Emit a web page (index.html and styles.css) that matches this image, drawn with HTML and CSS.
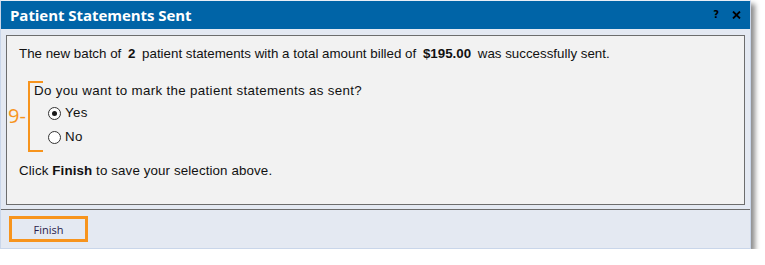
FILE: index.html
```html
<!DOCTYPE html>
<html>
<head>
<meta charset="utf-8">
<link rel="stylesheet" href="styles.css">
</head>
<body>
<div class="dialog">
  <div class="titlebar">
    <span class="title">Patient Statements Sent</span>
    <div class="tools">
      <span class="help">?</span>
      <svg class="close" width="9" height="8" viewBox="0 0 9 8"><path d="M1 0.5 L8 7.5 M8 0.5 L1 7.5" stroke="#000" stroke-width="1.8" fill="none"/></svg>
    </div>
  </div>
  <div class="panel">
    <p class="line first">The new batch of <b class="sp">2</b> patient statements with a total amount billed of <b class="sp">$195.00</b> was successfully sent.</p>
    <div class="group">
      <span class="marker">9-</span>
      <p class="line question">Do you want to mark the patient statements as sent?</p>
      <label class="radio yes"><span class="dot checked"></span>Yes</label>
      <label class="radio no"><span class="dot"></span>No</label>
    </div>
    <p class="line last">Click <b>Finish</b> to save your selection above.</p>
  </div>
  <div class="footer">
    <div class="btn">Finish</div>
  </div>
</div>
</body>
</html>
```
FILE: styles.css
```css
html, body { margin: 0; padding: 0; background: #ffffff; }
body { font-family: "Liberation Sans", Arial, sans-serif; }

.dialog {
  width: 749px;
  border: 1px solid #c9d6ea;
  border-top-color: #e8eef6;
  background: #e4e9f2;
  box-shadow: 4px 4px 5px rgba(0,0,0,0.45);
}

.titlebar {
  height: 28px;
  background: #0064a7;
  display: flex;
  align-items: center;
  justify-content: space-between;
  padding: 0 9px 0 9px;
}
.title {
  color: #ffffff;
  font-family: "Open Sans", "Noto Sans", sans-serif;
  font-weight: 700;
  font-size: 15px;
  letter-spacing: -0.05px;
}
.tools { display: flex; align-items: center; gap: 13px; }
.help {
  font-family: "DejaVu Sans", sans-serif;
  font-weight: 700;
  font-size: 10px;
  color: #000;
  line-height: 8px;
}
.close { display: block; }

.panel {
  margin: 6px 5px 0 5px;
  height: 168px;
  border: 1px solid #6d6d6d;
  background: #f2f2f2;
  padding: 0 12px;
  color: #111111;
  font-size: 13.33px;
}
.line { margin: 0; line-height: 14px; }
.first { margin-top: 11px; }
.sp { margin: 0 3px 0 3px; }
.question { letter-spacing: 0.33px; }

.group {
  position: relative;
  margin: 20px 0 0 9px;
  padding: 3px 0 8px 6px;
}
.group::before {
  content: "";
  position: absolute;
  left: 0; top: 0; bottom: 0;
  width: 13px;
  border: 2px solid #f7941d;
  border-right: none;
}
.marker {
  position: absolute;
  left: -20px;
  top: 23px;
  color: #f7941d;
  font-family: "Open Sans", sans-serif;
  font-size: 20px;
  line-height: 24px;
}
.radio {
  display: flex;
  align-items: center;
  gap: 4px;
  margin-left: 14px;
  line-height: 14px;
  letter-spacing: 0.3px;
}
.yes { margin-top: 8px; }
.no { margin-top: 10px; }
.dot {
  width: 11px; height: 11px;
  border: 1px solid #333;
  border-radius: 50%;
  background: #fff;
  display: flex;
  align-items: center;
  justify-content: center;
}
.dot.checked::after {
  content: "";
  width: 5px; height: 5px;
  border-radius: 50%;
  background: #1a1a1a;
}
.last { margin-top: 12px; letter-spacing: 0.12px; }

.footer {
  margin-top: 4px;
  border-top: 1px solid #6b6b6b;
  height: 39px;
  padding: 6px 0 0 8px;
  box-sizing: border-box;
}
.btn {
  width: 73px;
  height: 20px;
  border: 3px solid #f7941d;
  display: flex;
  align-items: center;
  justify-content: center;
  font-family: "Open Sans", "Noto Sans", sans-serif;
  font-size: 11px;
  color: #2a1c4c;
}
```
